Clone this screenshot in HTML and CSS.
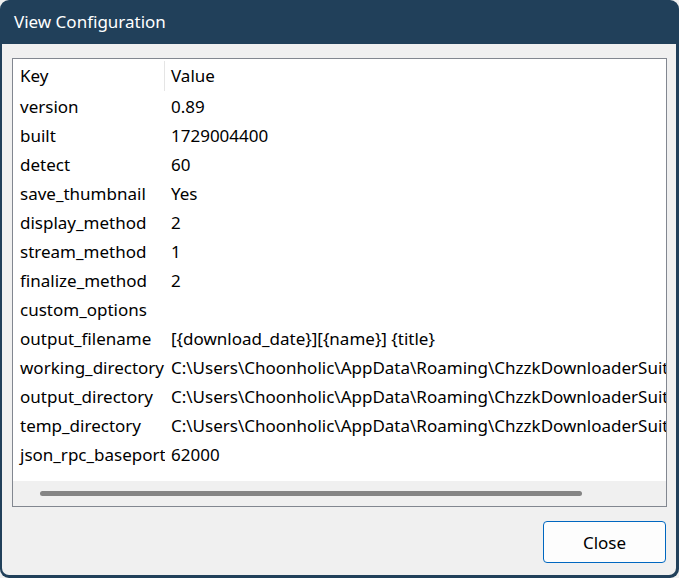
FILE: index.html
```html
<!DOCTYPE html>
<html>
<head>
<meta charset="utf-8">
<link rel="stylesheet" href="styles.css">
</head>
<body>
<div class="window">
  <div class="titlebar">View Configuration</div>
  <div class="content">
    <div class="listview">
      <div class="rows">
        <div class="row header"><div class="key">Key</div><div class="val">Value</div></div>
        <div class="row"><div class="key">version</div><div class="val">0.89</div></div>
        <div class="row"><div class="key">built</div><div class="val">1729004400</div></div>
        <div class="row"><div class="key">detect</div><div class="val">60</div></div>
        <div class="row"><div class="key">save_thumbnail</div><div class="val">Yes</div></div>
        <div class="row"><div class="key">display_method</div><div class="val">2</div></div>
        <div class="row"><div class="key">stream_method</div><div class="val">1</div></div>
        <div class="row"><div class="key">finalize_method</div><div class="val">2</div></div>
        <div class="row"><div class="key">custom_options</div><div class="val"></div></div>
        <div class="row"><div class="key">output_filename</div><div class="val">[{download_date}][{name}] {title}</div></div>
        <div class="row"><div class="key">working_directory</div><div class="val">C:\Users\Choonholic\AppData\Roaming\ChzzkDownloaderSuite</div></div>
        <div class="row"><div class="key">output_directory</div><div class="val">C:\Users\Choonholic\AppData\Roaming\ChzzkDownloaderSuite</div></div>
        <div class="row"><div class="key">temp_directory</div><div class="val">C:\Users\Choonholic\AppData\Roaming\ChzzkDownloaderSuite</div></div>
        <div class="row"><div class="key">json_rpc_baseport</div><div class="val">62000</div></div>
      </div>
      <div class="hscroll"><div class="thumb"></div></div>
    </div>
    <div class="buttons">
      <button class="btn">Close</button>
    </div>
  </div>
</div>
</body>
</html>
```

FILE: styles.css
```css
html, body {
  margin: 0;
  padding: 0;
  background: #f0f0f0;
}
body {
  width: 679px;
  height: 578px;
  font-family: "Noto Sans", "Open Sans", sans-serif;
}
.window {
  box-sizing: border-box;
  width: 679px;
  height: 578px;
  background: #21405a;
  border-radius: 9px;
  padding: 0 3px 3px 2px;
  display: flex;
  flex-direction: column;
}
.titlebar {
  height: 44px;
  flex: none;
  box-sizing: border-box;
  padding: 11px 0 0 12px;
  color: #ffffff;
  font-size: 17px;
  line-height: 22px;
}
.content {
  flex: 1;
  background: #f0f0f0;
  border-radius: 0 0 7px 7px;
  padding: 14px 9px 0 10px;
  display: flex;
  flex-direction: column;
}
.listview {
  box-sizing: border-box;
  height: 449px;
  border: 1px solid #828790;
  background: #ffffff;
  display: flex;
  flex-direction: column;
  overflow: hidden;
}
.rows {
  flex: 1;
  overflow: hidden;
}
.row {
  display: flex;
  height: 29px;
  align-items: center;
  font-size: 17px;
  color: #000000;
  white-space: nowrap;
}
.row.header {
  height: 33px;
}
.key {
  box-sizing: border-box;
  width: 152px;
  flex: none;
  padding-left: 7px;
  overflow: hidden;
}
.header .key {
  border-right: 1px solid #e5e5e5;
  height: 30px;
  line-height: 30px;
}
.val {
  flex: 1;
  min-width: 0;
  padding-left: 6px;
  overflow: hidden;
}
.hscroll {
  height: 25px;
  flex: none;
  background: #f0f0f0;
  display: flex;
  align-items: center;
  padding-left: 27px;
}
.thumb {
  width: 542px;
  height: 5px;
  border-radius: 3px;
  background: #858585;
}
.buttons {
  display: flex;
  justify-content: flex-end;
  padding-top: 14px;
}
.btn {
  box-sizing: border-box;
  width: 123px;
  height: 42px;
  margin-right: 1px;
  border: 1px solid #0067c0;
  border-radius: 4px;
  background: #fdfdfd;
  font-family: "Noto Sans", "Open Sans", sans-serif;
  font-size: 17px;
  color: #000000;
  padding: 0;
}
```
